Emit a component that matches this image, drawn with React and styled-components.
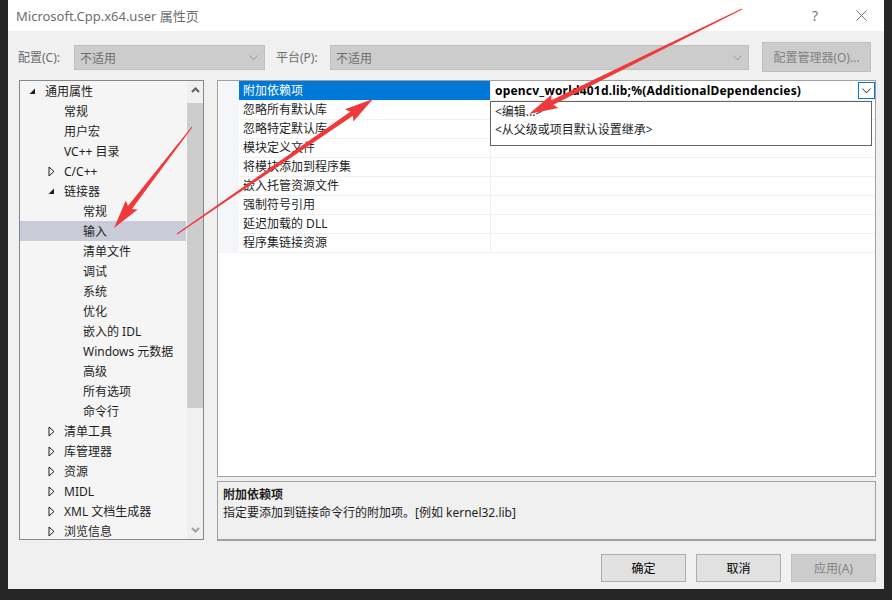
import styled, { createGlobalStyle } from "styled-components";

const GlobalStyle = createGlobalStyle`
  body {
    margin: 0;
    background: #262626;
    font-family: "Noto Sans", "Noto Sans CJK SC", sans-serif;
    font-size: 12px;
    color: #1e1e1e;
  }
`;

const Page = styled.div`
  position: relative;
  width: 892px;
  height: 600px;
  overflow: hidden;
`;

const Dialog = styled.div`
  margin-left: 8px;
  width: 876px;
  height: 589px;
  background: #f0f0f0;
  display: flex;
  flex-direction: column;
`;

const TitleBar = styled.div`
  height: 31px;
  background: #fff;
  display: flex;
  align-items: center;
  padding-left: 8px;
  font-size: 13px;
  color: #6e6e6e;
`;

const TitleButtons = styled.div`
  margin-left: auto;
  display: flex;
`;

const TitleButton = styled.div`
  width: 46px;
  height: 31px;
  display: flex;
  align-items: center;
  justify-content: center;
  color: #777;
  font-size: 14px;
`;

const ConfigBar = styled.div`
  height: 49px;
  display: flex;
  align-items: flex-start;
  padding: 14px 0 0 10px;
  box-sizing: border-box;
`;

const ConfigLabel = styled.div`
  width: ${(p) => p.$w}px;
  margin-left: ${(p) => p.$ml || 0}px;
  height: 25px;
  line-height: 25px;
  color: #6d6d6d;
`;

const Combo = styled.div`
  width: ${(p) => p.$w}px;
  height: 25px;
  box-sizing: border-box;
  background: #cccccc;
  border: 1px solid #bfbfbf;
  display: flex;
  align-items: center;
  padding: 0 6px 0 5px;
  color: #6d6d6d;
  span {
    flex: 1;
  }
`;

const ConfigButton = styled.div`
  margin-left: 13px;
  width: 109px;
  height: 30px;
  margin-top: -3px;
  box-sizing: border-box;
  background: #cccccc;
  border: 1px solid #bfbfbf;
  color: #838383;
  display: flex;
  align-items: center;
  justify-content: center;
`;

const Main = styled.div`
  display: flex;
  gap: 13px;
  padding: 0 8px 0 11px;
  height: 461px;
`;

const TreePanel = styled.div`
  width: 185px;
  height: 460px;
  box-sizing: border-box;
  border: 1px solid #828790;
  background: #f5f5f5;
  display: flex;
`;

const TreeList = styled.div`
  flex: 1;
  overflow: hidden;
`;

const TreeRow = styled.div`
  height: 20px;
  display: flex;
  align-items: center;
  padding-left: ${(p) => 9 + p.$level * 19}px;
  margin-right: 1px;
  background: ${(p) => (p.$selected ? "#c9cbd9" : "transparent")};
  white-space: nowrap;
`;

const Expander = styled.div`
  width: 16px;
  height: 20px;
  display: flex;
  align-items: center;
  justify-content: flex-start;
  flex-shrink: 0;
`;

const ScrollBar = styled.div`
  width: 16px;
  background: #f0f0f0;
  display: flex;
  flex-direction: column;
  align-items: stretch;
`;

const ScrollArrow = styled.div`
  height: 18px;
  display: flex;
  align-items: center;
  justify-content: center;
`;

const ScrollThumb = styled.div`
  margin-top: 4px;
  height: 305px;
  background: #cdcdcd;
`;

const ScrollSpace = styled.div`
  flex: 1;
`;

const RightColumn = styled.div`
  flex: 1;
  display: flex;
  flex-direction: column;
  gap: 4px;
`;

const GridPanel = styled.div`
  position: relative;
  height: 397px;
  box-sizing: border-box;
  border: 1px solid #a0a0a0;
  background: #fff;
`;

const GridRow = styled.div`
  display: grid;
  grid-template-columns: 21px 252px 1fr;
  height: 19px;
`;

const Margin = styled.div`
  background: #f4f6fa;
`;

const NameCell = styled.div`
  box-sizing: border-box;
  border-bottom: 1px solid #f0f0f0;
  border-right: 1px solid #f0f0f0;
  padding: 1px 0 0 4px;
  line-height: 18px;
  white-space: nowrap;
  background: ${(p) => (p.$selected ? "#0078d7" : "transparent")};
  color: ${(p) => (p.$selected ? "#fff" : "#1e1e1e")};
`;

const ValueCell = styled.div`
  box-sizing: border-box;
  border-bottom: 1px solid #f0f0f0;
  padding-left: 4px;
  line-height: 18px;
  font-weight: bold;
  color: #000;
  display: flex;
  align-items: center;
  span {
    flex: 1;
    padding-top: 1px;
    letter-spacing: 0.2px;
  }
`;

const DropButton = styled.div`
  width: 17px;
  height: 17px;
  box-sizing: border-box;
  border: 1px solid #0078d7;
  background: #fff;
  display: flex;
  align-items: center;
  justify-content: center;
`;

const Popup = styled.div`
  position: absolute;
  left: 272px;
  top: 20px;
  width: 382px;
  height: 45px;
  box-sizing: border-box;
  border: 1px solid #646464;
  background: #fff;
  padding-top: 1px;
`;

const PopupItem = styled.div`
  height: 18px;
  line-height: 18px;
  padding-left: 4px;
  color: #1e1e1e;
`;

const DescBox = styled.div`
  height: 60px;
  box-sizing: border-box;
  border: 1px solid #a0a0a0;
  border-bottom: 2px solid #a0a0a0;
  background: #f0f0f0;
  padding: 4px 0 0 5px;
`;

const DescTitle = styled.div`
  font-weight: bold;
  line-height: 18px;
`;

const DescText = styled.div`
  line-height: 18px;
`;

const Footer = styled.div`
  display: flex;
  justify-content: flex-end;
  gap: 10px;
  padding: 13px 8px 0 0;
`;

const Button = styled.div`
  width: 85px;
  height: 28px;
  box-sizing: border-box;
  border: 1px solid ${(p) => (p.$disabled ? "#bfbfbf" : "#adadad")};
  background: ${(p) => (p.$disabled ? "#cccccc" : "#e1e1e1")};
  color: ${(p) => (p.$disabled ? "#838383" : "#000")};
  display: flex;
  align-items: center;
  justify-content: center;
`;

const Overlay = styled.svg`
  position: absolute;
  left: 0;
  top: 0;
  pointer-events: none;
`;

const Chevron = ({ color = "#888", up = false }) => (
  <svg width="9" height="6" viewBox="0 0 9 6">
    <polyline
      points={up ? "0.5,5.5 4.5,1 8.5,5.5" : "0.5,0.5 4.5,5 8.5,0.5"}
      fill="none"
      stroke={color}
      strokeWidth="1"
    />
  </svg>
);

const ScrollChevron = ({ up }) => (
  <svg width="9" height="6" viewBox="0 0 9 6">
    <polyline
      points={up ? "1,5 4.5,1.5 8,5" : "1,1 4.5,4.5 8,1"}
      fill="none"
      stroke={up ? "#606060" : "#a0a0a0"}
      strokeWidth="2"
    />
  </svg>
);

const ExpandedIcon = () => (
  <svg width="7" height="7" viewBox="0 0 7 7">
    <polygon points="6,0.5 6,6 0.5,6" fill="#1e1e1e" />
  </svg>
);

const CollapsedIcon = () => (
  <svg width="7" height="11" viewBox="0 0 7 11">
    <polygon points="1,1 6,5.5 1,10" fill="none" stroke="#1e1e1e" strokeWidth="1" />
  </svg>
);

const tree = [
  { label: "通用属性", level: 0, icon: "open" },
  { label: "常规", level: 1 },
  { label: "用户宏", level: 1 },
  { label: "VC++ 目录", level: 1 },
  { label: "C/C++", level: 1, icon: "closed" },
  { label: "链接器", level: 1, icon: "open" },
  { label: "常规", level: 2 },
  { label: "输入", level: 2, selected: true },
  { label: "清单文件", level: 2 },
  { label: "调试", level: 2 },
  { label: "系统", level: 2 },
  { label: "优化", level: 2 },
  { label: "嵌入的 IDL", level: 2 },
  { label: "Windows 元数据", level: 2 },
  { label: "高级", level: 2 },
  { label: "所有选项", level: 2 },
  { label: "命令行", level: 2 },
  { label: "清单工具", level: 1, icon: "closed" },
  { label: "库管理器", level: 1, icon: "closed" },
  { label: "资源", level: 1, icon: "closed" },
  { label: "MIDL", level: 1, icon: "closed" },
  { label: "XML 文档生成器", level: 1, icon: "closed" },
  { label: "浏览信息", level: 1, icon: "closed" },
];

const props = [
  "附加依赖项",
  "忽略所有默认库",
  "忽略特定默认库",
  "模块定义文件",
  "将模块添加到程序集",
  "嵌入托管资源文件",
  "强制符号引用",
  "延迟加载的 DLL",
  "程序集链接资源",
];

// tapered red annotation arrow, tail -> tip
const arrowPoints = (tx, ty, px, py) => {
  const dx = px - tx;
  const dy = py - ty;
  const len = Math.hypot(dx, dy);
  const ux = dx / len;
  const uy = dy / len;
  const nx = -uy;
  const ny = ux;
  const headLen = 26;
  const bx = px - ux * headLen;
  const by = py - uy * headLen;
  const cx = px - ux * (headLen + 3);
  const cy = py - uy * (headLen + 3);
  const pts = [
    [tx + nx * 0.5, ty + ny * 0.5],
    [bx + nx * 2.5, by + ny * 2.5],
    [cx + nx * 7.5, cy + ny * 7.5],
    [px, py],
    [cx - nx * 7.5, cy - ny * 7.5],
    [bx - nx * 2.5, by - ny * 2.5],
    [tx - nx * 0.5, ty - ny * 0.5],
  ];
  return pts.map((p) => p.map((v) => v.toFixed(1)).join(",")).join(" ");
};

const arrows = [
  [192, 127, 114, 228],
  [177, 234, 373, 99],
  [742, 9, 529, 114],
];

export default function App() {
  return (
    <Page>
      <GlobalStyle />
      <Dialog>
        <TitleBar>
          Microsoft.Cpp.x64.user 属性页
          <TitleButtons>
            <TitleButton>?</TitleButton>
            <TitleButton>
              <svg width="11" height="11" viewBox="0 0 11 11">
                <path d="M0.5 0.5 L10.5 10.5 M10.5 0.5 L0.5 10.5" stroke="#777" strokeWidth="1" />
              </svg>
            </TitleButton>
          </TitleButtons>
        </TitleBar>

        <ConfigBar>
          <ConfigLabel $w={56}>配置(C):</ConfigLabel>
          <Combo $w={191}>
            <span>不适用</span>
            <Chevron color="#999" />
          </Combo>
          <ConfigLabel $w={54} $ml={11}>平台(P):</ConfigLabel>
          <Combo $w={419}>
            <span>不适用</span>
            <Chevron color="#999" />
          </Combo>
          <ConfigButton>配置管理器(O)...</ConfigButton>
        </ConfigBar>

        <Main>
          <TreePanel>
            <TreeList>
              {tree.map((item, i) => (
                <TreeRow key={i} $level={item.level} $selected={item.selected}>
                  <Expander>
                    {item.icon === "open" && <ExpandedIcon />}
                    {item.icon === "closed" && <CollapsedIcon />}
                  </Expander>
                  {item.label}
                </TreeRow>
              ))}
            </TreeList>
            <ScrollBar>
              <ScrollArrow>
                <ScrollChevron up />
              </ScrollArrow>
              <ScrollThumb />
              <ScrollSpace />
              <ScrollArrow>
                <ScrollChevron />
              </ScrollArrow>
            </ScrollBar>
          </TreePanel>

          <RightColumn>
            <GridPanel>
              {props.map((name, i) => (
                <GridRow key={name}>
                  <Margin />
                  <NameCell $selected={i === 0}>{name}</NameCell>
                  <ValueCell>
                    {i === 0 && (
                      <>
                        <span>opencv_world401d.lib;%(AdditionalDependencies)</span>
                        <DropButton>
                          <Chevron color="#333" />
                        </DropButton>
                      </>
                    )}
                  </ValueCell>
                </GridRow>
              ))}
              <Popup>
                <PopupItem>&lt;编辑...&gt;</PopupItem>
                <PopupItem>&lt;从父级或项目默认设置继承&gt;</PopupItem>
              </Popup>
            </GridPanel>
            <DescBox>
              <DescTitle>附加依赖项</DescTitle>
              <DescText>指定要添加到链接命令行的附加项。[例如 kernel32.lib]</DescText>
            </DescBox>
          </RightColumn>
        </Main>

        <Footer>
          <Button>确定</Button>
          <Button>取消</Button>
          <Button $disabled>应用(A)</Button>
        </Footer>
      </Dialog>

      <Overlay width="892" height="600" viewBox="0 0 892 600">
        {arrows.map((a, i) => (
          <polygon key={i} points={arrowPoints(...a)} fill="#f0393b" />
        ))}
      </Overlay>
    </Page>
  );
}
